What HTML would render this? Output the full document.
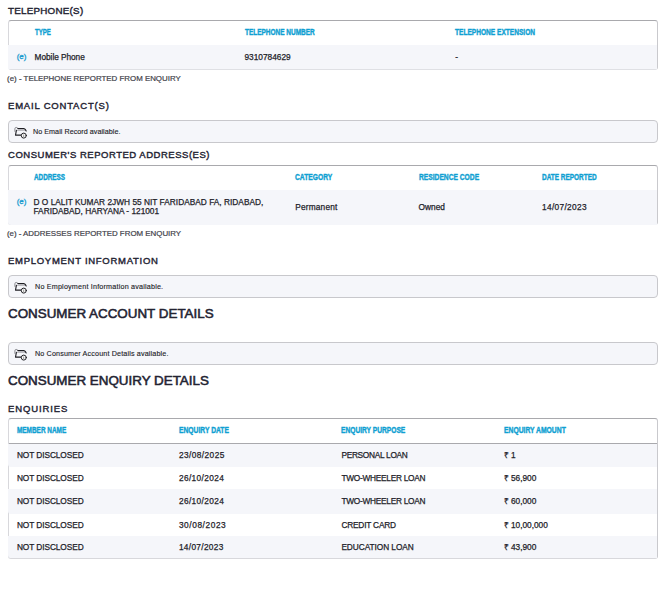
<!DOCTYPE html>
<html><head><meta charset="utf-8">
<style>
html,body{margin:0;padding:0;background:#fff;width:672px;height:606px;overflow:hidden;position:relative;font-family:"Liberation Sans",sans-serif;}
.a{position:absolute;white-space:nowrap;line-height:1;}
.t{font-weight:normal;font-size:9.5px;color:#232332;-webkit-text-stroke:0.4px #232332;}
.big{font-weight:normal;font-size:13.4px;color:#232332;-webkit-text-stroke:0.55px #232332;}
.box{position:absolute;left:8px;width:650px;box-sizing:border-box;border:1px solid #d8d8dc;border-right-color:#c9c9cd;border-top-color:#a9a9ad;border-radius:3px;background:#fff;}
.bg{position:absolute;left:8px;width:649px;background:#f5f6fa;border-radius:0 0 0 3px;}
.h{font-weight:bold;font-size:8.4px;color:#0f9fd2;transform-origin:0 0;transform:scaleX(0.795);-webkit-text-stroke:0.4px #0f9fd2;}
.c{font-weight:normal;font-size:8.3px;color:#1e1e2a;-webkit-text-stroke:0.25px #1e1e2a;}
.e{font-size:8px;color:#1a9ccf;-webkit-text-stroke:0.3px #1a9ccf;}
.fn{font-size:7.9px;color:#3e3e48;-webkit-text-stroke:0.2px #3e3e48;}
.nb{position:absolute;left:7.5px;width:650.5px;box-sizing:border-box;border:1px solid #c8c8cc;border-radius:4px;background:#f5f6fa;}
.tx{font-size:7.2px;color:#222228;-webkit-text-stroke:0.12px #222228;}
</style></head><body>
<div class="a t" style="left:8px;top:5.80px;font-size:9.8px;letter-spacing:0.25px;">TELEPHONE(S)</div>
<div class="box" style="top:19.5px;height:50px;border-bottom-color:#dfe0e4;"></div>
<div class="bg" style="top:44.8px;height:24.2px;border-radius:0;"></div>
<div class="a h" style="left:34.6px;top:28.09px;transform:scaleX(0.722);">TYPE</div>
<div class="a h" style="left:244.6px;top:28.09px;transform:scaleX(0.772);">TELEPHONE NUMBER</div>
<div class="a h" style="left:455.2px;top:28.09px;transform:scaleX(0.785);">TELEPHONE EXTENSION</div>
<div class="a e" style="left:16.7px;top:53.43px;">(e)</div>
<div class="a c" style="left:34.6px;top:53.17px;letter-spacing:-0.05px;">Mobile Phone</div>
<div class="a c" style="left:244.5px;top:53.17px;">9310784629</div>
<div class="a c" style="left:455.2px;top:53.17px;">-</div>
<div class="a fn" style="left:7.1px;top:74.91px;">(e) - TELEPHONE REPORTED FROM ENQUIRY</div>
<div class="a t" style="left:8px;top:100.76px;letter-spacing:0.81px;">EMAIL CONTACT(S)</div>
<div class="nb" style="top:120px;height:22.5px;"></div>
<svg style="position:absolute;left:13px;top:126px;" width="17" height="15" viewBox="0 0 17 15"><g fill="none" stroke-linecap="round" stroke-linejoin="round"><path d="M1.9,5.4 V2.7 Q1.9,1.5 3.1,1.5 H3.9 Q4.6,1.5 4.9,2.6" stroke="#8a8a90" stroke-width="1"/><path d="M4.2,4.4 H12.6" stroke="#b0b0b6" stroke-width="0.9"/><path d="M4.9,2.6 H10.8 Q11.8,2.6 12.6,3.9 L13.2,5" stroke="#1f1f24" stroke-width="1.1"/><path d="M3.4,4.3 L2.5,9.1 H8.4" stroke="#1f1f24" stroke-width="1.1"/><circle cx="10.8" cy="9.6" r="2.5" fill="#fff" stroke="#1f1f24" stroke-width="1"/><path d="M10.7,8.9 V10.6" stroke="#777" stroke-width="0.8"/></g></svg>
<div class="a tx" style="left:33px;top:127.91px;letter-spacing:0.03px;">No Email Record available.</div>
<div class="a t" style="left:8px;top:150.46px;letter-spacing:0.52px;">CONSUMER'S REPORTED ADDRESS(ES)</div>
<div class="box" style="top:164.5px;height:60.5px;"></div>
<div class="bg" style="top:190px;height:35.2px;"></div>
<div class="a h" style="left:34.3px;top:172.89px;transform:scaleX(0.758);">ADDRESS</div>
<div class="a h" style="left:295.2px;top:172.89px;transform:scaleX(0.800);">CATEGORY</div>
<div class="a h" style="left:418.6px;top:172.89px;transform:scaleX(0.797);">RESIDENCE CODE</div>
<div class="a h" style="left:542.1px;top:172.89px;transform:scaleX(0.769);">DATE REPORTED</div>
<div class="a e" style="left:16.7px;top:198.23px;">(e)</div>
<div class="a c" style="left:33.5px;top:197.87px;letter-spacing:0.02px;">D O LALIT KUMAR 2JWH 55 NIT FARIDABAD FA, RIDABAD,</div>
<div class="a c" style="left:33.5px;top:207.47px;">FARIDABAD, HARYANA - 121001</div>
<div class="a c" style="left:295.2px;top:202.97px;letter-spacing:0.19px;">Permanent</div>
<div class="a c" style="left:418.6px;top:202.97px;">Owned</div>
<div class="a c" style="left:542.1px;top:202.97px;letter-spacing:0.32px;">14/07/2023</div>
<div class="a fn" style="left:6.9px;top:229.71px;">(e) - ADDRESSES REPORTED FROM ENQUIRY</div>
<div class="a t" style="left:8px;top:255.96px;letter-spacing:0.72px;">EMPLOYMENT INFORMATION</div>
<div class="nb" style="top:275px;height:22.5px;"></div>
<svg style="position:absolute;left:13px;top:281px;" width="17" height="15" viewBox="0 0 17 15"><g fill="none" stroke-linecap="round" stroke-linejoin="round"><path d="M1.9,5.4 V2.7 Q1.9,1.5 3.1,1.5 H3.9 Q4.6,1.5 4.9,2.6" stroke="#8a8a90" stroke-width="1"/><path d="M4.2,4.4 H12.6" stroke="#b0b0b6" stroke-width="0.9"/><path d="M4.9,2.6 H10.8 Q11.8,2.6 12.6,3.9 L13.2,5" stroke="#1f1f24" stroke-width="1.1"/><path d="M3.4,4.3 L2.5,9.1 H8.4" stroke="#1f1f24" stroke-width="1.1"/><circle cx="10.8" cy="9.6" r="2.5" fill="#fff" stroke="#1f1f24" stroke-width="1"/><path d="M10.7,8.9 V10.6" stroke="#777" stroke-width="0.8"/></g></svg>
<div class="a tx" style="left:35px;top:282.91px;letter-spacing:0.19px;">No Employment Information available.</div>
<div class="a big" style="left:8px;top:307.36px;">CONSUMER ACCOUNT DETAILS</div>
<div class="nb" style="top:342px;height:22.5px;"></div>
<svg style="position:absolute;left:13px;top:348px;" width="17" height="15" viewBox="0 0 17 15"><g fill="none" stroke-linecap="round" stroke-linejoin="round"><path d="M1.9,5.4 V2.7 Q1.9,1.5 3.1,1.5 H3.9 Q4.6,1.5 4.9,2.6" stroke="#8a8a90" stroke-width="1"/><path d="M4.2,4.4 H12.6" stroke="#b0b0b6" stroke-width="0.9"/><path d="M4.9,2.6 H10.8 Q11.8,2.6 12.6,3.9 L13.2,5" stroke="#1f1f24" stroke-width="1.1"/><path d="M3.4,4.3 L2.5,9.1 H8.4" stroke="#1f1f24" stroke-width="1.1"/><circle cx="10.8" cy="9.6" r="2.5" fill="#fff" stroke="#1f1f24" stroke-width="1"/><path d="M10.7,8.9 V10.6" stroke="#777" stroke-width="0.8"/></g></svg>
<div class="a tx" style="left:35px;top:349.91px;letter-spacing:0.14px;">No Consumer Account Details available.</div>
<div class="a big" style="left:8px;top:374.46px;">CONSUMER ENQUIRY DETAILS</div>
<div class="a t" style="left:8px;top:403.76px;letter-spacing:0.87px;">ENQUIRIES</div>
<div class="box" style="top:418px;height:141px;"></div>
<div class="bg" style="top:444px;height:22.5px;"></div>
<div class="bg" style="top:488.7px;height:25.5px;"></div>
<div class="bg" style="top:536.1px;height:22.3px;"></div>
<div style="position:absolute;left:9px;width:648px;top:443px;height:1px;background:#a9a9ad;"></div>
<div class="a h" style="left:16.9px;top:425.89px;transform:scaleX(0.766);">MEMBER NAME</div>
<div class="a h" style="left:178.9px;top:425.89px;transform:scaleX(0.803);">ENQUIRY DATE</div>
<div class="a h" style="left:341.4px;top:425.89px;transform:scaleX(0.794);">ENQUIRY PURPOSE</div>
<div class="a h" style="left:503.6px;top:425.89px;transform:scaleX(0.808);">ENQUIRY AMOUNT</div>
<div class="a c" style="left:16.9px;top:451.07px;letter-spacing:-0.07px;">NOT DISCLOSED</div>
<div class="a c" style="left:178.9px;top:451.07px;letter-spacing:0.43px;">23/08/2025</div>
<div class="a c" style="left:341.4px;top:451.07px;letter-spacing:-0.28px;">PERSONAL LOAN</div>
<div class="a c" style="left:503.6px;top:451.07px;">&#8377; 1</div>
<div class="a c" style="left:16.9px;top:473.77px;letter-spacing:-0.07px;">NOT DISCLOSED</div>
<div class="a c" style="left:178.9px;top:473.77px;letter-spacing:0.38px;">26/10/2024</div>
<div class="a c" style="left:341.4px;top:473.77px;letter-spacing:-0.26px;">TWO-WHEELER LOAN</div>
<div class="a c" style="left:503.6px;top:473.77px;">&#8377; 56,900</div>
<div class="a c" style="left:16.9px;top:496.77px;letter-spacing:-0.07px;">NOT DISCLOSED</div>
<div class="a c" style="left:178.9px;top:496.77px;letter-spacing:0.38px;">26/10/2024</div>
<div class="a c" style="left:341.4px;top:496.77px;letter-spacing:-0.26px;">TWO-WHEELER LOAN</div>
<div class="a c" style="left:503.6px;top:496.77px;">&#8377; 60,000</div>
<div class="a c" style="left:16.9px;top:520.87px;letter-spacing:-0.07px;">NOT DISCLOSED</div>
<div class="a c" style="left:178.9px;top:520.87px;letter-spacing:0.59px;">30/08/2023</div>
<div class="a c" style="left:341.4px;top:520.87px;letter-spacing:-0.19px;">CREDIT CARD</div>
<div class="a c" style="left:503.6px;top:520.87px;">&#8377; 10,00,000</div>
<div class="a c" style="left:16.9px;top:542.97px;letter-spacing:-0.07px;">NOT DISCLOSED</div>
<div class="a c" style="left:178.9px;top:542.97px;letter-spacing:0.32px;">14/07/2023</div>
<div class="a c" style="left:341.4px;top:542.97px;letter-spacing:-0.06px;">EDUCATION LOAN</div>
<div class="a c" style="left:503.6px;top:542.97px;">&#8377; 43,900</div>
</body></html>
